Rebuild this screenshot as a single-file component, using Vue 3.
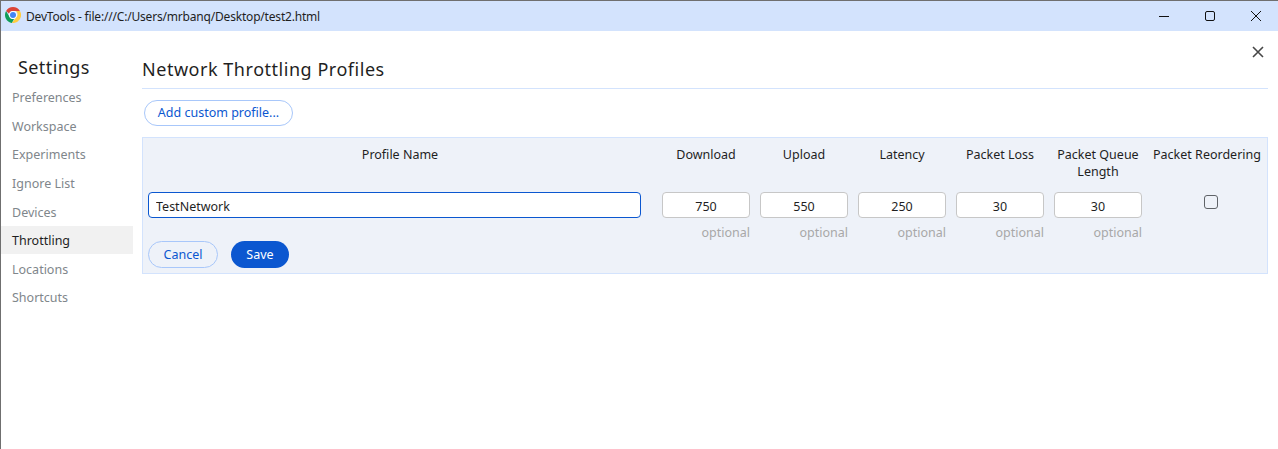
<script setup>
const nav = ['Preferences', 'Workspace', 'Experiments', 'Ignore List', 'Devices', 'Throttling', 'Locations', 'Shortcuts']
const metrics = [
  { label: 'Download', value: '750' },
  { label: 'Upload', value: '550' },
  { label: 'Latency', value: '250' },
  { label: 'Packet Loss', value: '30' },
  { label: 'Packet Queue Length', value: '30' },
]
</script>

<template>
  <div class="window">
    <header class="titlebar">
      <svg class="chrome" viewBox="0 0 16 16" width="16" height="16">
        <path d="M8 0a8 8 0 0 1 6.93 4H8a4 4 0 0 0-3.8 2.75L1.07 4A8 8 0 0 1 8 0z" fill="#db4437" />
        <path d="M1.07 4 4.6 10a4 4 0 0 0 4.6 1.8L6.9 15.93A8 8 0 0 1 1.07 4z" fill="#0f9d58" />
        <path d="M14.93 4A8 8 0 0 1 6.9 15.93L10.9 10.6A4 4 0 0 0 10.9 4z" fill="#ffcd40" />
        <circle cx="8" cy="8" r="3.9" fill="#fff" />
        <circle cx="8" cy="8" r="3" fill="#4285f4" />
      </svg>
      <span class="wintitle">DevTools - file:///C:/Users/mrbanq/Desktop/test2.html</span>
      <div class="controls">
        <svg viewBox="0 0 11 11" width="11" height="11"><path d="M0 5.5h10" stroke="#111" stroke-width="1" /></svg>
        <svg viewBox="0 0 11 11" width="11" height="11"><rect x="0.5" y="0.5" width="9" height="9" rx="1.5" fill="none" stroke="#111" /></svg>
        <svg viewBox="0 0 11 11" width="11" height="11"><path d="M0 0l10 10M10 0 0 10" stroke="#111" stroke-width="1" /></svg>
      </div>
    </header>
    <div class="body">
      <aside class="sidebar">
        <h2 class="settings">Settings</h2>
        <div v-for="item in nav" :key="item" class="navitem" :class="{ active: item === 'Throttling' }">{{ item }}</div>
      </aside>
      <main class="content">
        <svg class="close" viewBox="0 0 12 12" width="12" height="12"><path d="M1 1l10 10M11 1 1 11" stroke="#474747" stroke-width="1.6" /></svg>
        <h1 class="heading">Network Throttling Profiles</h1>
        <button class="addbtn">Add custom profile...</button>
        <section class="table">
          <div class="grid">
            <div class="th">Profile Name</div>
            <div v-for="m in metrics" :key="m.label" class="th">{{ m.label }}</div>
            <div class="th">Packet Reordering</div>

            <div class="namecell"><input class="nameinput" value="TestNetwork" /></div>
            <div v-for="m in metrics" :key="m.label + 'v'" class="field">
              <input class="numinput" :value="m.value" />
              <span class="optional">optional</span>
            </div>
            <div class="checkcell"><span class="check"></span></div>
          </div>
          <div class="actions">
            <button class="cancel">Cancel</button>
            <button class="save">Save</button>
          </div>
        </section>
      </main>
    </div>
  </div>
</template>

<style scoped>
.window {
  height: 449px;
  box-sizing: border-box;
  border-left: 1px solid #6f6f6f;
  border-top: 1px solid #6f6f6f;
  display: flex;
  flex-direction: column;
  background: #fff;
  font-family: "Noto Sans", "Liberation Sans", sans-serif;
  font-size: 12.5px;
  color: #1f1f1f;
  overflow: hidden;
}
.titlebar {
  height: 30px;
  flex: none;
  background: #d3e3fd;
  display: flex;
  align-items: center;
  padding-left: 4px;
}
.chrome { flex: none; margin-bottom: 2px; }
.wintitle {
  margin-left: 5px;
  font-size: 12px;
  letter-spacing: -0.19px;
  color: #1f1f1f;
}
.controls {
  margin-left: auto;
  display: flex;
  gap: 35px;
  margin-right: 16px;
  align-items: center;
}
.body { flex: 1; display: flex; min-height: 0; }
.sidebar { width: 132px; flex: none; }
.settings {
  margin: 24px 0 0 17px;
  font-size: 18px;
  font-weight: 400;
  letter-spacing: 0.4px;
  line-height: 25px;
  height: 28.2px;
  color: #1f1f1f;
}
.navitem {
  height: 28.6px;
  line-height: 30px;
  padding-left: 11px;
  color: #80868b;
  font-size: 12.5px;
}
.navitem.active {
  background: linear-gradient(#f1f1f1 28px, transparent 28px);
  color: #1f1f1f;
}
.content {
  flex: 1;
  position: relative;
  padding: 0 10px 0 9px;
}
.close { position: absolute; right: 14px; top: 15px; }
.heading {
  margin: 0;
  padding-top: 26px;
  height: 31px;
  line-height: 25px;
  font-size: 18px;
  font-weight: 400;
  letter-spacing: 0.53px;
  border-bottom: 1px solid #d3e3fd;
  color: #1f1f1f;
}
.addbtn {
  display: block;
  margin: 11px 0 0 2px;
  width: 149px;
  height: 26px;
  border: 1px solid #a8c7fa;
  border-radius: 13px;
  background: #fff;
  color: #0b57d0;
  font: inherit;
  padding: 0 0 2px;
}
.table {
  margin-top: 11px;
  height: 137px;
  box-sizing: border-box;
  background: #eef2f9;
  border: 1px solid #d3e3fd;
  padding: 0 5px;
}
.grid {
  display: grid;
  grid-template-columns: 504px repeat(5, 88px) 110px;
  column-gap: 10px;
}
.th {
  text-align: center;
  line-height: 17px;
  padding-top: 8px;
  height: 54px;
  box-sizing: border-box;
  color: #1f1f1f;
}
.namecell { padding-right: 11px; height: 49px; }
.nameinput {
  width: 100%;
  box-sizing: border-box;
  height: 26px;
  border: 1px solid #0b57d0;
  border-radius: 4px;
  padding: 2px 7px 0;
  font: inherit;
  color: #1f1f1f;
  background: #fff;
  outline: none;
}
.field { display: flex; flex-direction: column; height: 49px; }
.numinput {
  width: 100%;
  box-sizing: border-box;
  height: 26px;
  border: 1px solid #c7c7c7;
  border-radius: 4px;
  padding: 2px 0 0;
  text-align: center;
  font: inherit;
  color: #1f1f1f;
  background: #fff;
  outline: none;
}
.optional {
  text-align: right;
  margin-top: 6px;
  line-height: 17px;
  color: #a8a8a8;
}
.checkcell { display: flex; justify-content: center; align-items: flex-start; padding-top: 3px; padding-left: 8px; }
.check {
  width: 14px;
  height: 14px;
  box-sizing: border-box;
  border: 1px solid #5f6368;
  border-radius: 3px;
  background: #eef2f9;
}
.actions { display: flex; gap: 13px; }
.cancel {
  width: 70px;
  height: 27px;
  border: 1px solid #a8c7fa;
  border-radius: 14px;
  background: transparent;
  color: #0b57d0;
  font: inherit;
  padding: 0;
}
.save {
  width: 58px;
  height: 27px;
  border: none;
  border-radius: 14px;
  background: #0b57d0;
  color: #fff;
  font: inherit;
  padding: 0;
}
</style>

<style>
html, body { margin: 0; background: #fff; }
</style>
